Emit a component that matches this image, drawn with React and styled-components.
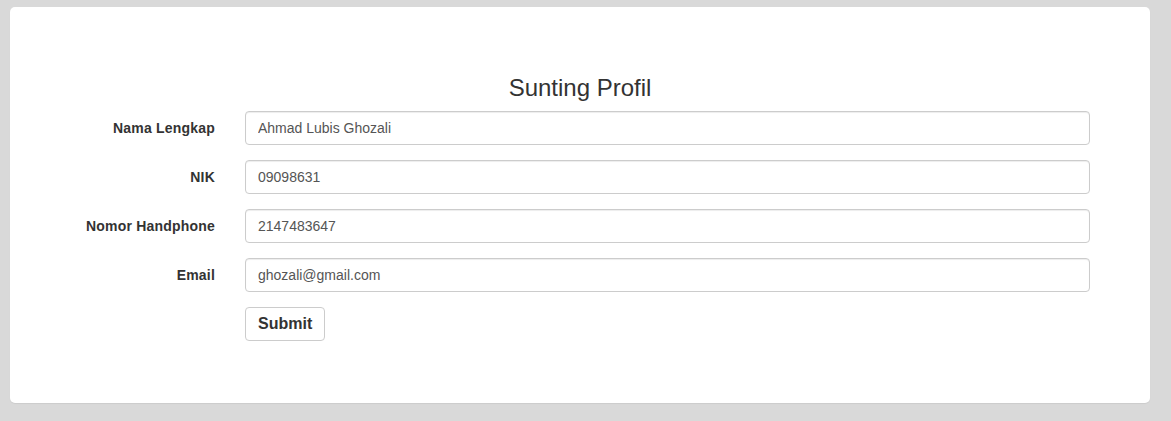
import React from "react";
import styled, { createGlobalStyle } from "styled-components";

const Global = createGlobalStyle`
  html, body { margin: 0; padding: 0; background: #d9d9d9; }
  body { font-family: "Liberation Sans", Arial, Helvetica, sans-serif; font-size: 14px; color: #333; }
  * { box-sizing: border-box; }
`;

const Page = styled.div`
  padding: 7px 21px 18px 10px;
`;

const Card = styled.div`
  background: #fff;
  border-radius: 5px;
  height: 396px;
  padding: 68px 60px 0 0;
  box-shadow: 0 1px 1px rgba(0, 0, 0, 0.06);
`;

const Title = styled.h3`
  margin: 0 0 10px;
  font-size: 24px;
  font-weight: 400;
  line-height: 26px;
  text-align: center;
  padding-left: 60px;
  color: #333;
`;

const Form = styled.form`
  display: grid;
  grid-template-columns: 205px 1fr;
  column-gap: 30px;
  row-gap: 15px;
`;

const Label = styled.label`
  text-align: right;
  font-weight: 700;
  font-size: 14px;
  line-height: 20px;
  padding-top: 7px;
  letter-spacing: 0.2px;
  color: #333;
`;

const Input = styled.input`
  display: block;
  width: 100%;
  height: 34px;
  padding: 6px 12px;
  font-family: inherit;
  font-size: 14px;
  line-height: 20px;
  color: #555;
  background: #fff;
  border: 1px solid #ccc;
  border-radius: 4px;
  box-shadow: inset 0 1px 1px rgba(0, 0, 0, 0.075);
  outline: none;
`;

const Button = styled.button`
  justify-self: start;
  height: 34px;
  padding: 6px 12px;
  font-family: inherit;
  font-size: 16px;
  font-weight: 700;
  line-height: 20px;
  color: #333;
  background: #fff;
  border: 1px solid #ccc;
  border-radius: 4px;
  cursor: pointer;
`;

const Spacer = styled.div``;

const fields = [
  ["Nama Lengkap", "Ahmad Lubis Ghozali"],
  ["NIK", "09098631"],
  ["Nomor Handphone", "2147483647"],
  ["Email", "ghozali@gmail.com"],
];

export default function App() {
  return (
    <>
      <Global />
      <Page>
        <Card>
          <Title>Sunting Profil</Title>
          <Form onSubmit={(e) => e.preventDefault()}>
            {fields.map(([label, value]) => (
              <React.Fragment key={label}>
                <Label>{label}</Label>
                <Input defaultValue={value} />
              </React.Fragment>
            ))}
            <Spacer />
            <Button type="submit">Submit</Button>
          </Form>
        </Card>
      </Page>
    </>
  );
}
